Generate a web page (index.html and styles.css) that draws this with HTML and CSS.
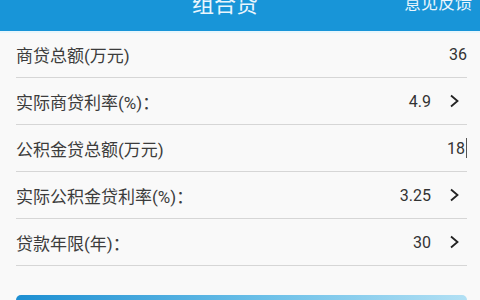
FILE: index.html
```html
<!DOCTYPE html>
<html lang="zh-CN">
<head>
  <meta charset="UTF-8">
  <meta name="viewport" content="width=device-width, initial-scale=1.0">
  <title>组合贷</title>
  <link rel="stylesheet" href="styles.css">
</head>
<body>
  <div class="header">
    <div class="header-side"></div>
    <h1>组合贷</h1>
    <a class="feedback" href="#">意见反馈</a>
  </div>

  <div class="form-list">
    <div class="form-row">
      <span class="label">商贷总额(万元)</span>
      <span class="value">36</span>
    </div>
    <div class="form-row">
      <span class="label">实际商贷利率(%)：</span>
      <span class="value">4.9</span>
      <svg class="arrow" width="11" height="14" viewBox="0 0 11 14"><path d="M2 1.5 L8.5 7 L2 12.5" fill="none" stroke="#222" stroke-width="1.8"/></svg>
    </div>
    <div class="form-row">
      <span class="label">公积金贷总额(万元)</span>
      <span class="value">18<span class="caret"></span></span>
    </div>
    <div class="form-row">
      <span class="label">实际公积金贷利率(%)：</span>
      <span class="value">3.25</span>
      <svg class="arrow" width="11" height="14" viewBox="0 0 11 14"><path d="M2 1.5 L8.5 7 L2 12.5" fill="none" stroke="#222" stroke-width="1.8"/></svg>
    </div>
    <div class="form-row">
      <span class="label">贷款年限(年)：</span>
      <span class="value">30</span>
      <svg class="arrow" width="11" height="14" viewBox="0 0 11 14"><path d="M2 1.5 L8.5 7 L2 12.5" fill="none" stroke="#222" stroke-width="1.8"/></svg>
    </div>
  </div>

  <div class="actions">
    <button class="calc-button">开始计算</button>
  </div>
</body>
</html>
```

FILE: styles.css
```css
body {
  font-family: Roboto, "Noto Sans CJK SC", sans-serif;
  background-color: #f9f9f9;
  margin: 0;
  padding: 0;
  color: #333;
}

.header {
  height: 31px;
  background-color: #1895d8;
  border-bottom: 2px solid #e8f6fc;
  display: grid;
  grid-template-columns: 192px auto 1fr;
  align-items: start;
  overflow: hidden;
  padding: 0 8px 0 0;
}

.header h1 {
  margin: -8px 0 0 0;
  font-size: 22px;
  line-height: 26px;
  font-weight: normal;
  color: #eaf6fd;
}

.feedback {
  justify-self: end;
  margin-top: -9px;
  font-size: 17px;
  line-height: 24px;
  color: #eaf6fd;
  text-decoration: none;
}

.form-list {
  margin: -2px 13px 0 16px;
}

.form-row {
  height: 46px;
  display: flex;
  align-items: center;
  border-bottom: 1px solid #d6d6d6;
  font-size: 17px;
}

.label {
  flex: 1;
  color: #3c3c3c;
}

.value {
  font-size: 16px;
  color: #333;
  display: flex;
  align-items: center;
}

.caret {
  display: inline-block;
  width: 1px;
  height: 20px;
  background-color: #555;
  margin-left: 1px;
}

.arrow {
  margin: 0 7px 0 18px;
}

.actions {
  margin: 29px 13px 0 16px;
}

.calc-button {
  width: 100%;
  height: 44px;
  border: none;
  border-radius: 5px;
  background: linear-gradient(to right, #1d8fd2, #6cc0e8 55%, #b2e0f4);
  color: #fff;
  font-size: 18px;
  font-family: inherit;
}
```
